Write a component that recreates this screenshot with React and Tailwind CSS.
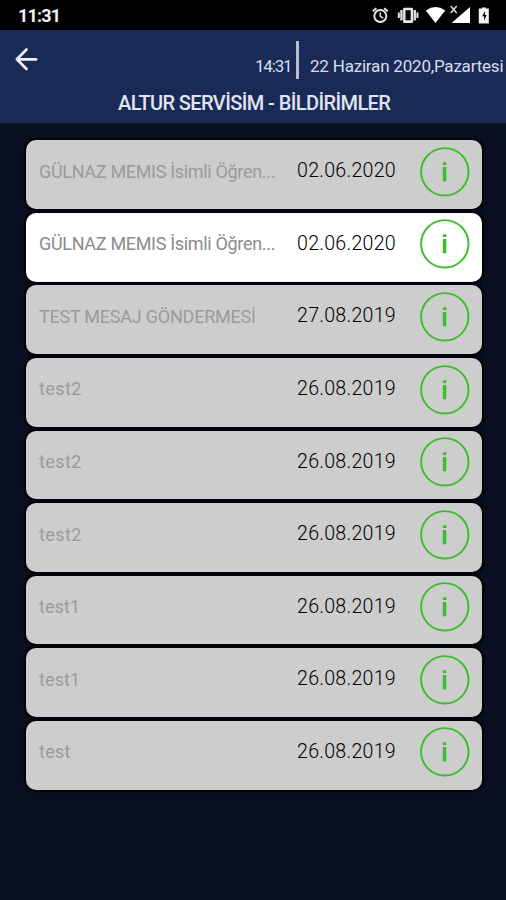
const notifications = [
  { title: 'GÜLNAZ MEMIS İsimli Öğren...', date: '02.06.2020', tracking: 'tracking-[-0.320px]' },
  { title: 'GÜLNAZ MEMIS İsimli Öğren...', date: '02.06.2020', tracking: 'tracking-[-0.320px]', unread: true },
  { title: 'TEST MESAJ GÖNDERMESİ', date: '27.08.2019', tracking: 'tracking-[-0.230px]' },
  { title: 'test2', date: '26.08.2019', tracking: 'tracking-[0.400px]' },
  { title: 'test2', date: '26.08.2019', tracking: 'tracking-[0.400px]' },
  { title: 'test2', date: '26.08.2019', tracking: 'tracking-[0.400px]' },
  { title: 'test1', date: '26.08.2019', tracking: 'tracking-[0.100px]' },
  { title: 'test1', date: '26.08.2019', tracking: 'tracking-[0.100px]' },
  { title: 'test', date: '26.08.2019', tracking: 'tracking-[0.300px]' },
];

function StatusIcons() {
  return (
    <svg className="h-[30px] w-[136px]" viewBox="370 0 136 30" fill="none">
      <g stroke="#e8e8e8" strokeWidth="1.9">
        <circle cx="380.3" cy="16" r="6" />
        <path d="M372.8 11.3l3.6-3M387.8 11.3l-3.6-3" />
        <path d="M380.3 12.5v3.8l3 1.8" strokeWidth="1.4" />
      </g>
      <g fill="#e8e8e8">
        <path fillRule="evenodd" d="M404.3 7.7h7.6a1.2 1.2 0 0 1 1.2 1.2v12.8a1.2 1.2 0 0 1-1.2 1.2h-7.6a1.2 1.2 0 0 1-1.2-1.2V8.9a1.2 1.2 0 0 1 1.2-1.2zM405.5 10.3v10h5.2v-10z" />
        <path d="M400.3 10h2.3v10.600h-2.3zM397.800 12.500h2v5.600h-2zM413.600 10h2.3v10.600h-2.3zM416.400 12.500h2v5.600h-2z" />
      </g>
      <path fill="#fff" d="M425.800 10.400Q435.500 3.800 445.200 10.400L435.500 23z" />
      <path fill="#fff" d="M470 7v16h-18.500z" />
      <path stroke="#ddd" strokeWidth="1.500" d="M450.700 6l6 7M456.700 6l-6 7" />
      <path fill="#f4f4f4" d="M478.800 8.400h3V7.500h4v.900h3v15h-10z" />
      <path fill="#000" d="M485 11l-2.800 5.300h1.900v4.200l2.600-5.600h-1.900z" />
    </svg>
  );
}

function BackArrow() {
  return (
    <svg className="h-6 w-6" viewBox="0 0 24 24" fill="none" stroke="#eef1fa" strokeWidth="2.700" strokeLinecap="round" strokeLinejoin="round">
      <path d="M22.200 12.300H2.900M12.500 2.500L2.900 12.300L12.500 22" />
    </svg>
  );
}

function InfoIcon() {
  return (
    <svg className="h-[50px] w-[50px] shrink-0" viewBox="0 0 50 50" fill="none">
      <circle cx="24.800" cy="24.800" r="23.700" stroke="#3dbd2c" strokeWidth="1.900" />
      <path fill="#3dbd2c" d="M22.800 15.300h3.500v2.700h-3.500zM22.800 20h3.500v14.200h-3.500z" />
    </svg>
  );
}

function Row({ item }) {
  return (
    <li
      className={`flex h-[68.700px] w-[456px] shrink-0 rounded-[10px] pl-[13px] shadow-[0_0_2px_2px_#000208] ${item.unread ? 'bg-white' : 'bg-[#cdcdcd]'}`}
    >
      <span className={`w-[258px] pt-[18.400px] text-[18px] leading-[26px] whitespace-nowrap ${item.tracking} ${item.unread ? 'text-[#8b8b8b]' : 'text-[#9b9b9b]'}`}>
        {item.title}
      </span>
      <span className="w-[123px] pt-[18px] text-[19.600px] leading-[26px] font-light tracking-[0.260px] whitespace-nowrap text-black">{item.date}</span>
      <span className="pt-[6.500px]">
        <InfoIcon />
      </span>
    </li>
  );
}

export default function App() {
  return (
    <div className="flex h-[900px] w-[506px] flex-col overflow-hidden bg-[#0a1022] font-[Roboto,'Liberation_Sans',sans-serif]">
      <div className="flex h-[30px] shrink-0 items-center justify-between bg-black pl-[18px]">
        <span className="pt-[2px] text-[18px] leading-[26px] font-bold tracking-[-0.800px] text-[#f2f2f2]">11:31</span>
        <StatusIcons />
      </div>
      <header className="flex h-[93px] shrink-0 flex-col bg-[#192a57]">
        <div className="flex h-[54px] justify-between pl-[14px]">
          <span className="pt-[17px]">
            <BackArrow />
          </span>
          <div className="flex w-[251px] pt-[11px] text-[17px] leading-[24px] whitespace-nowrap text-[#d9deea]">
            <span className="w-[41px] shrink-0 pt-[13px] tracking-[-1.200px]">14:31</span>
            <span className="h-[38px] w-[3px] shrink-0 bg-[#b9bfd0]" />
            <span className="shrink-0 pt-[13px] pl-[11px] tracking-[-0.200px]">22 Haziran 2020,Pazartesi</span>
          </div>
        </div>
        <h1 className="pt-[5px] pl-[118px] text-[20px] leading-[28px] font-medium tracking-[-0.600px] whitespace-nowrap text-[#e1e5f0]">ALTUR SERVİSİM - BİLDİRİMLER</h1>
      </header>
      <ul className="flex flex-col gap-[3.900px] pt-[17.300px] pl-[26px]">
        {notifications.map((item, i) => (
          <Row key={i} item={item} />
        ))}
      </ul>
    </div>
  );
}
